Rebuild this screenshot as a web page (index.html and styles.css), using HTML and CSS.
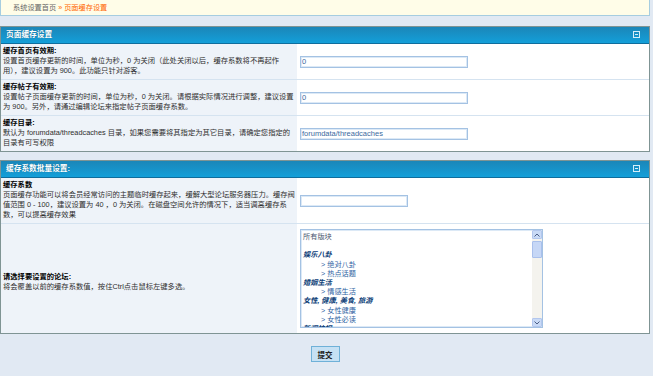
FILE: index.html
```html
<!DOCTYPE html>
<html lang="zh-CN">
<head>
  <meta charset="UTF-8">
  <meta name="viewport" content="width=device-width, initial-scale=1.0">
  <title>页面缓存设置</title>
  <link rel="stylesheet" href="styles.css">
</head>
<body>
  <div class="main">
    <div class="nav">
      <a href="#">系统设置首页</a>
      <span class="cur">&raquo; 页面缓存设置</span>
    </div>

    <form id="cacheForm">
      <table class="tb">
        <colgroup><col class="c1"><col></colgroup>
        <tr>
          <th colspan="2">
            页面缓存设置
            <svg class="fold" width="8" height="8" viewBox="0 0 8 8"><rect x="0.5" y="0.5" width="6" height="6" fill="none" stroke="#d6eef9"/><path d="M2 3.5h3" stroke="#d6eef9"/></svg>
          </th>
        </tr>
        <tr>
          <td class="l"><b>缓存首页有效期:</b><br>设置首页缓存更新的时间，单位为秒，0 为关闭（此处关闭以后，缓存系数将不再起作<br>用），建议设置为 900。此功能只针对游客。</td>
          <td class="r"><input type="text" class="txt" value="0"></td>
        </tr>
        <tr>
          <td class="l"><b>缓存帖子有效期:</b><br>设置帖子页面缓存更新的时间，单位为秒，0 为关闭。请根据实际情况进行调整，建议设置<br>为 900。另外，请通过编辑论坛来指定帖子页面缓存系数。</td>
          <td class="r"><input type="text" class="txt" value="0"></td>
        </tr>
        <tr class="last">
          <td class="l"><b>缓存目录:</b><br>默认为 forumdata/threadcaches 目录，如果您需要将其指定为其它目录，请确定您指定的<br>目录有可写权限</td>
          <td class="r"><input type="text" class="txt" value="forumdata/threadcaches"></td>
        </tr>
      </table>

      <table class="tb tb2">
        <colgroup><col class="c1"><col></colgroup>
        <tr>
          <th colspan="2">
            缓存系数批量设置:
            <svg class="fold" width="8" height="8" viewBox="0 0 8 8"><rect x="0.5" y="0.5" width="6" height="6" fill="none" stroke="#d6eef9"/><path d="M2 3.5h3" stroke="#d6eef9"/></svg>
          </th>
        </tr>
        <tr>
          <td class="l"><b>缓存系数</b><br>页面缓存功能可以将会员经常访问的主题临时缓存起来，缓解大型论坛服务器压力。缓存阀<br>值范围 0 - 100，建议设置为 40 ，0 为关闭。在磁盘空间允许的情况下，适当调高缓存系<br>数，可以提高缓存效果</td>
          <td class="r"><input type="text" class="txt short" value=""></td>
        </tr>
        <tr class="last">
          <td class="l mid"><b>请选择要设置的论坛:</b><br>将会覆盖以前的缓存系数值，按住Ctrl点击鼠标左键多选。</td>
          <td class="r sel">
            <div class="list">
              <div class="opts">
                <div class="opt">所有版块</div>
                <div class="opt">&nbsp;</div>
                <div class="grp">娱乐八卦</div>
                <div class="opt sub">&gt; 绝对八卦</div>
                <div class="opt sub">&gt; 热点话题</div>
                <div class="grp">婚姻生活</div>
                <div class="opt sub">&gt; 情感生活</div>
                <div class="grp">女性, 健康, 美食, 旅游</div>
                <div class="opt sub">&gt; 女性健康</div>
                <div class="opt sub">&gt; 女性必读</div>
                <div class="grp">新闻快报</div>
              </div>
              <div class="sbar">
                <span class="sbtn"><svg width="6" height="4" viewBox="0 0 6 4"><path d="M0.5 3.5L3 1l2.5 2.5" fill="none" stroke="#4d5f86"/></svg></span>
                <span class="thumb"></span>
                <span class="track"></span>
                <span class="sbtn"><svg width="6" height="4" viewBox="0 0 6 4"><path d="M0.5 0.5L3 3l2.5-2.5" fill="none" stroke="#4d5f86"/></svg></span>
              </div>
            </div>
          </td>
        </tr>
      </table>

      <div class="btns">
        <button type="submit" class="btn">提交</button>
      </div>
    </form>
  </div>
</body>
</html>
```

FILE: styles.css
```css
body {
  margin: 0;
  background-color: #e1e9f3;
  font-family: "Liberation Sans", "Noto Sans CJK SC", sans-serif;
  font-size: 7.3px;
  line-height: 10px;
  color: #333;
}
.main {
  width: 650px;
}
.nav {
  margin-top: -1px;
  height: 15px;
  line-height: 15px;
  padding: 0 12px;
  background-color: #fffde8;
  border: 1px solid #a6cde0;
  font-size: 7.2px;
  color: #666;
}
.nav a {
  color: #666;
  text-decoration: none;
}
.nav .cur {
  color: #ff6600;
}
.tb {
  width: 650px;
  table-layout: fixed;
  border-collapse: separate;
  border-spacing: 0;
  border: 1px solid #7f9494;
  margin-top: 10px;
  background-color: #fff;
}
.tb .c1 {
  width: 296px;
}
.tb2 {
  margin-top: 8px;
}
.tb th {
  height: 16px;
  padding: 0 8px 0 5px;
  text-align: left;
  font-size: 7.7px;
  font-weight: bold;
  color: #fff;
  background: linear-gradient(#1b86b8, #139fd9);
  border-bottom: 1px solid #0f6d9c;
  text-shadow: 0 0 1px rgba(0, 0, 0, 0.3);
}
.fold {
  float: right;
  margin-top: 1px;
}
.tb td {
  border-bottom: 1px solid #d5e3f0;
}
.tb tr.last td {
  border-bottom: none;
}
.tb td.l {
  padding: 2px 1px 3px 2px;
  background-color: #eef3f9;
  vertical-align: middle;
  white-space: nowrap;
  color: #2e2e2e;
}
.tb td.l.mid {
  padding-top: 10px;
}
.tb td.l b {
  color: #000;
}
.tb td.r {
  padding: 0 3px;
  vertical-align: middle;
}
.tb td.sel {
  padding: 5px 3px;
}
.txt {
  box-sizing: border-box;
  width: 168px;
  height: 12px;
  margin: 0;
  padding: 0 1px;
  border: 1px solid #a4c2e3;
  box-shadow: inset 0 0 0 1px #dce9f6;
  font-family: "Liberation Sans", "Noto Sans CJK SC", sans-serif;
  font-size: 7.5px;
  color: #3b6aa0;
  background-color: #fff;
  outline: none;
}
.txt.short {
  width: 108px;
}
.list {
  box-sizing: border-box;
  display: flex;
  width: 243px;
  height: 99px;
  border: 1px solid #a4c2e3;
  box-shadow: inset 0 0 0 1px #dce9f6;
  background-color: #fff;
}
.opts {
  flex: 1;
  overflow: hidden;
  padding: 2px 2px 0 2px;
  font-size: 7.2px;
  line-height: 9.2px;
}
.opt {
  color: #4a5670;
}
.opt.sub {
  padding-left: 18px;
  color: #2f63a3;
}
.grp {
  font-weight: bold;
  font-style: italic;
  color: #0d3e78;
}
.sbar {
  display: flex;
  flex-direction: column;
  width: 10px;
  background-color: #f4f3ee;
}
.sbtn {
  box-sizing: border-box;
  display: flex;
  align-items: center;
  justify-content: center;
  height: 9px;
  background-color: #c9daf6;
  border: 1px solid #b3c7ee;
  border-radius: 1px;
}
.thumb {
  box-sizing: border-box;
  height: 17px;
  margin-top: 2px;
  background-color: #c6d7f6;
  border: 1px solid #a9c0ec;
  border-radius: 1px;
}
.track {
  flex: 1;
}
.btns {
  margin-top: 12px;
  text-align: center;
}
.btn {
  box-sizing: border-box;
  width: 29px;
  height: 16px;
  padding: 0;
  border: 1px solid #6fb1d8;
  background-color: #c6e1f4;
  font-family: "Liberation Sans", "Noto Sans CJK SC", sans-serif;
  font-size: 7.5px;
  font-weight: bold;
  color: #222;
  cursor: pointer;
}
```
